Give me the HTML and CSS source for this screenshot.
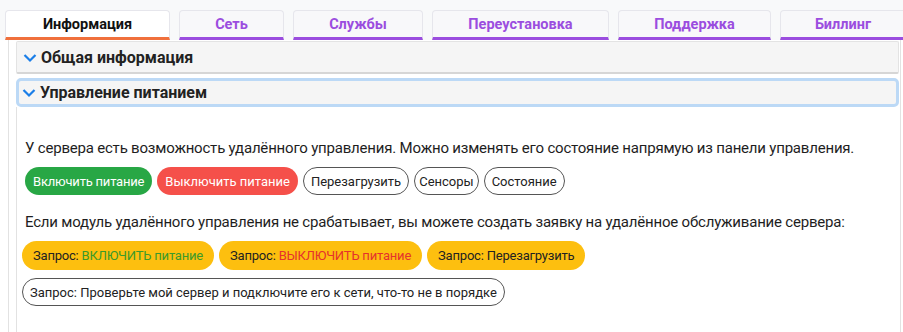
FILE: index.html
```html
<!DOCTYPE html>
<html lang="ru">
<head>
    <meta charset="UTF-8">
    <title>Сервер</title>
    <link rel="stylesheet" href="styles.css">
</head>
<body>

    <div class="tabs">
        <div class="tab active" style="width: 165px">Информация</div>
        <div class="tab" style="width: 105px">Сеть</div>
        <div class="tab" style="width: 130px">Службы</div>
        <div class="tab" style="width: 177px">Переустановка</div>
        <div class="tab" style="width: 153px">Поддержка</div>
        <div class="tab" style="width: 126px">Биллинг</div>
    </div>

    <div class="panel">
        <div class="acc-item">
            <div class="acc-head">
                <svg class="chev" width="14" height="10" viewBox="0 0 14 10"><path d="M1.5 2 L7 7.5 L12.5 2" fill="none" stroke="#1a7ee8" stroke-width="2.2"/></svg>
                Общая информация
            </div>
        </div>
        <div class="acc-item open">
            <div class="acc-head focus">
                <svg class="chev" width="14" height="10" viewBox="0 0 14 10"><path d="M1.5 2 L7 7.5 L12.5 2" fill="none" stroke="#1a7ee8" stroke-width="2.2"/></svg>
                Управление питанием
            </div>
            <div class="acc-body">
                <p>У сервера есть возможность удалённого управления. Можно изменять его состояние напрямую из панели управления.</p>
                <div class="btn-row">
                    <button class="btn green">Включить питание</button>
                    <button class="btn red">Выключить питание</button>
                    <button class="btn outline">Перезагрузить</button>
                    <button class="btn outline tight">Сенсоры</button>
                    <button class="btn outline">Состояние</button>
                </div>

                <p>Если модуль удалённого управления не срабатывает, вы можете создать заявку на удалённое обслуживание сервера:</p>
                <div class="btn-row req">
                    <button class="btn yellow">Запрос: <span class="t-green">ВКЛЮЧИТЬ питание</span></button>
                    <button class="btn yellow">Запрос: <span class="t-red">ВЫКЛЮЧИТЬ питание</span></button>
                    <button class="btn yellow">Запрос: Перезагрузить</button>
                </div>
                <div class="btn-row req">
                    <button class="btn outline">Запрос: Проверьте мой сервер и подключите его к сети, что-то не в порядке</button>
                </div>
            </div>
        </div>
    </div>

</body>
</html>
```

FILE: styles.css
```css
body {
    font-family: Roboto, "Noto Sans", sans-serif;
    background-color: white;
    margin: 0;
    color: #222;
    overflow: hidden;
}

.tabs {
    display: flex;
    gap: 9px;
    padding: 10px 0 0 5px;
    background-color: #f8f9fa;
    white-space: nowrap;
    overflow: hidden;
}
.tab {
    flex-shrink: 0;
    box-sizing: border-box;
    height: 30px;
    line-height: 28px;
    text-align: center;
    font-size: 14.5px;
    font-weight: bold;
    color: #9b4ddf;
    background-color: #f8f8fa;
    border: 1px solid #e6e6ec;
    border-bottom: 3px solid #9b4ddf;
    border-radius: 4px 4px 0 0;
}
.tab.active {
    color: #111;
    background-color: white;
    border-bottom-color: #f0703c;
}

.panel {
    margin-left: 8px;
    width: 893px;
    height: 292px;
    border-left: 1px solid #e2e2e2;
    border-right: 1px solid #e2e2e2;
    padding: 1px 0 0 7px;
    box-sizing: border-box;
    overflow: hidden;
}

.acc-item {
    width: 883px;
}
.acc-head {
    display: flex;
    align-items: center;
    gap: 4px;
    height: 33px;
    padding-left: 6px;
    font-size: 16px;
    font-weight: bold;
    color: #222;
    background-color: #f5f5f5;
    border: 1px solid #e3e3e3;
    border-bottom: 2px solid #d6d6d6;
    border-radius: 2px;
    box-sizing: border-box;
}
.acc-head.focus {
    margin-top: 4px;
    height: 29px;
    border: 3px solid #bcd9f6;
    border-radius: 5px;
    padding-left: 3px;
}
.chev {
    margin-top: 1px;
}
.acc-body {
    border-left: 1px solid #e2e2e2;
    padding: 30px 0 0 8px;
    height: 230px;
}
.acc-body p {
    margin: 0 0 8px;
    font-size: 15px;
    line-height: 22px;
    letter-spacing: -0.2px;
    color: #1e1e1e;
}

.btn-row {
    display: flex;
    gap: 5px;
    margin-bottom: 16px;
}
.btn-row.req {
    margin-left: -3px;
    margin-bottom: 8px;
}
.btn {
    font-family: Roboto, "Noto Sans", sans-serif;
    font-size: 13px;
    height: 28px;
    padding: 0 7px;
    border-radius: 15px;
    border: 1px solid transparent;
    color: #222;
    background: none;
    white-space: nowrap;
}
.btn.tight {
    padding: 0 4px;
}
.btn.green {
    background-color: #28a745;
    color: white;
    letter-spacing: -0.2px;
}
.btn.red {
    background-color: #f5504a;
    color: white;
}
.btn.outline {
    border-color: #555;
    background-color: white;
}
.btn.yellow {
    height: 29px;
    background-color: #fdbf0f;
    padding: 0 10px;
    letter-spacing: -0.2px;
}
.t-green {
    color: #3b9a2a;
}
.t-red {
    color: #e5322c;
}
```
